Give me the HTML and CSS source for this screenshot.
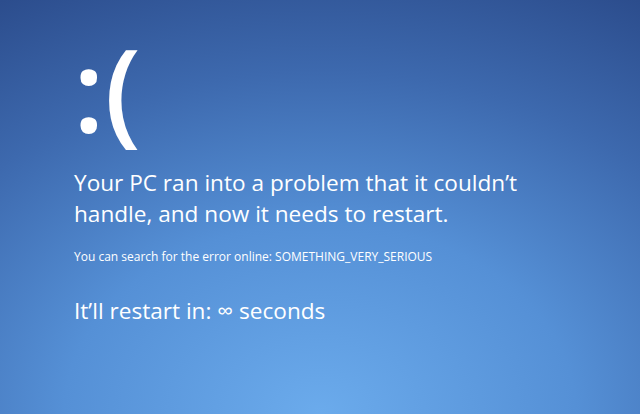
FILE: index.html
```html
<!DOCTYPE html>
<html lang="en">
<head>
<meta charset="UTF-8">
<meta name="viewport" content="width=device-width, initial-scale=1.0">
<title>Blue Screen</title>
<link rel="stylesheet" href="styles.css">
</head>
<body>

<div class="screen">
    <div class="face">:(</div>
    <p class="message">Your PC ran into a problem that it couldn’t<br>handle, and now it needs to restart.</p>
    <p class="error">You can search for the error online: SOMETHING_VERY_SERIOUS</p>
    <p class="countdown">It’ll restart in: ∞ seconds</p>
</div>

</body>
</html>
```

FILE: styles.css
```css
html, body {
    margin: 0;
    height: 100%;
}
body {
    font-family: "Open Sans", "Noto Sans", sans-serif;
    color: #fff;
    background: radial-gradient(ellipse 100% 115% at 50% 100%, #6babec 0%, #5590d6 40%, #3d69ae 72%, #2c4d8d 100%);
    overflow: hidden;
}
.screen {
    padding: 19px 0 0 74px;
}
.face {
    font-size: 115px;
    font-weight: 600;
    line-height: 138px;
    margin-left: -1px;
}
.message {
    font-size: 22.6px;
    line-height: 31px;
    margin: 10px 0 0;
}
.error {
    font-size: 12px;
    margin: 19px 0 0;
}
.countdown {
    font-size: 22.6px;
    margin: 30px 0 0;
}
```
